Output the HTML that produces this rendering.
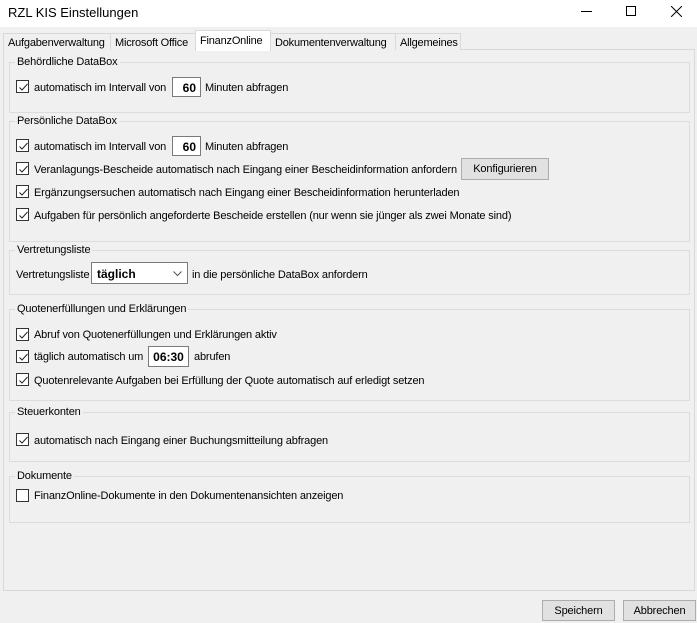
<!DOCTYPE html>
<html><head><meta charset="utf-8"><style>
*{box-sizing:border-box;margin:0;padding:0}
body{width:697px;height:623px;background:#f0f0f0;font-family:"Liberation Sans",sans-serif;font-size:11px;letter-spacing:-0.15px;color:#000;position:relative;overflow:hidden}
.a{position:absolute;white-space:nowrap}
.tb{position:absolute;left:0;top:0;width:697px;height:27px;background:#fff}
.tab{position:absolute;top:33px;height:17px;border:1px solid #d9d9d9;border-bottom:none;background:#f0f0f0;padding:3px 0 0 4px;font-size:11px;white-space:nowrap;overflow:hidden;letter-spacing:-0.2px}
.gb{position:absolute;left:9px;width:681px;border:1px solid #dcdcdc}
.gl{position:absolute;left:5px;top:-7px;background:#f0f0f0;padding:0 2px;white-space:nowrap}
.cb{position:absolute;left:16px;width:13px;height:13px;border:1px solid #333;background:#fff}
.cb svg{position:absolute;left:1px;top:1px}
.in{position:absolute;border:1px solid #7a7a7a;background:#fff;font-weight:bold;text-align:right;padding:3px 4px 0 0;font-size:12px;letter-spacing:0}
.btn{position:absolute;border:1px solid #adadad;background:#e1e1e1;text-align:center;padding-top:4px;white-space:nowrap}
</style></head><body>
<div class="tb"></div>
<div class="a" style="left:8px;top:5px;font-size:13px;letter-spacing:0">RZL KIS Einstellungen</div>
<div class="a" style="left:581px;top:11px;width:11px;height:1px;background:#000"></div>
<div class="a" style="left:626px;top:6px;width:10px;height:10px;border:1px solid #000"></div>
<svg class="a" style="left:671px;top:6px" width="11" height="11"><path d="M0 0L11 11M11 0L0 11" stroke="#000" stroke-width="1"/></svg>

<div class="a" style="left:3px;top:49px;width:692px;height:542px;border:1px solid #d9d9d9;background:#f0f0f0"></div>
<div class="tab" style="left:3px;width:108px">Aufgabenverwaltung</div>
<div class="tab" style="left:110px;width:86px">Microsoft Office</div>
<div class="tab" style="left:270px;width:126px">Dokumentenverwaltung</div>
<div class="tab" style="left:395px;width:66px">Allgemeines</div>
<div class="tab" style="left:195px;top:30px;height:21px;width:76px;background:#fff;padding-top:4px;z-index:2">FinanzOnline</div>

<div class="gb" style="top:62px;height:51px"><span class="gl">Behördliche DataBox</span></div>
<div class="gb" style="top:121px;height:121px"><span class="gl">Persönliche DataBox</span></div>
<div class="gb" style="top:250px;height:45px"><span class="gl">Vertretungsliste</span></div>
<div class="gb" style="top:309px;height:92px"><span class="gl">Quotenerfüllungen und Erklärungen</span></div>
<div class="gb" style="top:412px;height:50px"><span class="gl">Steuerkonten</span></div>
<div class="gb" style="top:476px;height:47px"><span class="gl">Dokumente</span></div>

<div class="cb" style="top:80px"><svg width="11" height="11"><path d="M1.5 5.5L4 8L9.5 2" stroke="#222" fill="none"/></svg></div>
<div class="a" style="left:34px;top:82px">automatisch im Intervall von</div>
<div class="in" style="left:172px;top:77px;width:29px;height:20px">60</div>
<div class="a" style="left:205px;top:82px">Minuten abfragen</div>

<div class="cb" style="top:139px"><svg width="11" height="11"><path d="M1.5 5.5L4 8L9.5 2" stroke="#222" fill="none"/></svg></div>
<div class="a" style="left:34px;top:141px">automatisch im Intervall von</div>
<div class="in" style="left:172px;top:136px;width:29px;height:20px">60</div>
<div class="a" style="left:205px;top:141px">Minuten abfragen</div>

<div class="cb" style="top:162px"><svg width="11" height="11"><path d="M1.5 5.5L4 8L9.5 2" stroke="#222" fill="none"/></svg></div>
<div class="a" style="left:34px;top:164px">Veranlagungs-Bescheide automatisch nach Eingang einer Bescheidinformation anfordern</div>
<div class="btn" style="left:461px;top:158px;width:88px;height:22px">Konfigurieren</div>

<div class="cb" style="top:185px"><svg width="11" height="11"><path d="M1.5 5.5L4 8L9.5 2" stroke="#222" fill="none"/></svg></div>
<div class="a" style="left:34px;top:187px">Ergänzungsersuchen automatisch nach Eingang einer Bescheidinformation herunterladen</div>

<div class="cb" style="top:208px"><svg width="11" height="11"><path d="M1.5 5.5L4 8L9.5 2" stroke="#222" fill="none"/></svg></div>
<div class="a" style="left:34px;top:210px">Aufgaben für persönlich angeforderte Bescheide erstellen (nur wenn sie jünger als zwei Monate sind)</div>

<div class="a" style="left:16px;top:269px">Vertretungsliste</div>
<div class="a" style="left:91px;top:262px;width:97px;height:22px;border:1px solid #7a7a7a;background:#fff;font-weight:bold;font-size:12px;letter-spacing:0;padding:4px 0 0 5px">täglich</div>
<svg class="a" style="left:173px;top:271px" width="9" height="6"><path d="M0.5 0.5L4.5 4.5L8.5 0.5" stroke="#555" fill="none"/></svg>
<div class="a" style="left:192px;top:269px">in die persönliche DataBox anfordern</div>

<div class="cb" style="top:328px"><svg width="11" height="11"><path d="M1.5 5.5L4 8L9.5 2" stroke="#222" fill="none"/></svg></div>
<div class="a" style="left:34px;top:329px">Abruf von Quotenerfüllungen und Erklärungen aktiv</div>
<div class="cb" style="top:350px"><svg width="11" height="11"><path d="M1.5 5.5L4 8L9.5 2" stroke="#222" fill="none"/></svg></div>
<div class="a" style="left:34px;top:351px">täglich automatisch um</div>
<div class="in" style="left:148px;top:346px;width:41px;height:21px;text-align:center;padding:3px 0 0">06:30</div>
<div class="a" style="left:194px;top:351px">abrufen</div>
<div class="cb" style="top:373px"><svg width="11" height="11"><path d="M1.5 5.5L4 8L9.5 2" stroke="#222" fill="none"/></svg></div>
<div class="a" style="left:34px;top:375px">Quotenrelevante Aufgaben bei Erfüllung der Quote automatisch auf erledigt setzen</div>

<div class="cb" style="top:433px"><svg width="11" height="11"><path d="M1.5 5.5L4 8L9.5 2" stroke="#222" fill="none"/></svg></div>
<div class="a" style="left:34px;top:435px">automatisch nach Eingang einer Buchungsmitteilung abfragen</div>

<div class="cb" style="top:489px"></div>
<div class="a" style="left:34px;top:490px">FinanzOnline-Dokumente in den Dokumentenansichten anzeigen</div>

<div class="btn" style="left:542px;top:600px;width:73px;height:21px">Speichern</div>
<div class="btn" style="left:623px;top:600px;width:73px;height:21px">Abbrechen</div>
</body></html>
